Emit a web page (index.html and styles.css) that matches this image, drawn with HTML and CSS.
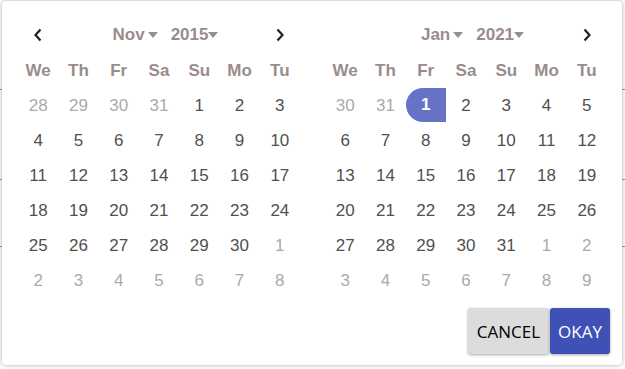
FILE: index.html
```html
<!DOCTYPE html>
<html>
<head>
<meta charset="utf-8">
<link rel="stylesheet" href="styles.css">
</head>
<body>
<div class="page">
  <div class="row r1"></div>
  <div class="row r2"></div>
  <div class="row r3"></div>
  <div class="row r4"></div>
</div>
<div class="dialog">
  <div class="cals">
    <div class="cal">
      <div class="head">
        <span class="arrow"><svg width="10" height="14" viewBox="0 0 10 14"><path d="M7.5 1.5 L2.5 7 L7.5 12.5" fill="none" stroke="#222" stroke-width="2.2"/></svg></span>
        <div class="sel">
          <span class="drop">Nov<i class="caret"></i></span>
          <span class="drop">2015<i class="caret tight"></i></span>
        </div>
        <span class="arrow last"><svg width="10" height="14" viewBox="0 0 10 14"><path d="M2.5 1.5 L7.5 7 L2.5 12.5" fill="none" stroke="#222" stroke-width="2.2"/></svg></span>
      </div>
      <div class="grid wd">
        <span>We</span><span>Th</span><span>Fr</span><span>Sa</span><span>Su</span><span>Mo</span><span>Tu</span>
      </div>
      <div class="grid days">
        <span class="o">28</span><span class="o">29</span><span class="o">30</span><span class="o">31</span><span>1</span><span>2</span><span>3</span>
        <span>4</span><span>5</span><span>6</span><span>7</span><span>8</span><span>9</span><span>10</span>
        <span>11</span><span>12</span><span>13</span><span>14</span><span>15</span><span>16</span><span>17</span>
        <span>18</span><span>19</span><span>20</span><span>21</span><span>22</span><span>23</span><span>24</span>
        <span>25</span><span>26</span><span>27</span><span>28</span><span>29</span><span>30</span><span class="o">1</span>
        <span class="o">2</span><span class="o">3</span><span class="o">4</span><span class="o">5</span><span class="o">6</span><span class="o">7</span><span class="o">8</span>
      </div>
    </div>
    <div class="cal">
      <div class="head">
        <span class="arrow"></span>
        <div class="sel">
          <span class="drop">Jan<i class="caret"></i></span>
          <span class="drop">2021<i class="caret tight"></i></span>
        </div>
        <span class="arrow last"><svg width="10" height="14" viewBox="0 0 10 14"><path d="M2.5 1.5 L7.5 7 L2.5 12.5" fill="none" stroke="#222" stroke-width="2.2"/></svg></span>
      </div>
      <div class="grid wd">
        <span>We</span><span>Th</span><span>Fr</span><span>Sa</span><span>Su</span><span>Mo</span><span>Tu</span>
      </div>
      <div class="grid days">
        <span class="o">30</span><span class="o">31</span><span class="selected">1</span><span>2</span><span>3</span><span>4</span><span>5</span>
        <span>6</span><span>7</span><span>8</span><span>9</span><span>10</span><span>11</span><span>12</span>
        <span>13</span><span>14</span><span>15</span><span>16</span><span>17</span><span>18</span><span>19</span>
        <span>20</span><span>21</span><span>22</span><span>23</span><span>24</span><span>25</span><span>26</span>
        <span>27</span><span>28</span><span>29</span><span>30</span><span>31</span><span class="o">1</span><span class="o">2</span>
        <span class="o">3</span><span class="o">4</span><span class="o">5</span><span class="o">6</span><span class="o">7</span><span class="o">8</span><span class="o">9</span>
      </div>
    </div>
  </div>
  <div class="actions">
    <button class="btn cancel">CANCEL</button>
    <button class="btn okay">OKAY</button>
  </div>
</div>
</body>
</html>
```
FILE: styles.css
```css
html, body {
  margin: 0;
  padding: 0;
  background: #fff;
}
body {
  width: 625px;
  height: 369px;
  overflow: hidden;
  position: relative;
  font-family: "Liberation Sans", Arial, sans-serif;
}
.page {
  display: flex;
  flex-direction: column;
}
.row {
  border-bottom: 1px solid #999;
}
.r1 { height: 89px; }
.r2 { height: 89px; }
.r3 { height: 66px; }
.r4 { height: 100px; border-bottom: none; }

.dialog {
  position: absolute;
  left: 2px;
  top: 1px;
  width: 620px;
  height: 364px;
  box-sizing: border-box;
  background: #fff;
  border-radius: 4px;
  box-shadow: 0 0 4px rgba(0, 0, 0, 0.35);
  padding: 16px 12px 11px 16px;
  display: flex;
  flex-direction: column;
}
.cals {
  display: flex;
  gap: 25px;
}
.cal {
  width: 282px;
}
.head {
  height: 36px;
  display: grid;
  grid-template-columns: repeat(7, 1fr);
  align-items: center;
}
.arrow {
  display: flex;
  justify-content: center;
  align-items: center;
}
.arrow.last {
  grid-column: 7;
}
.sel {
  grid-column: 2 / 7;
  display: flex;
  justify-content: center;
  gap: 13px;
  padding-left: 13px;
  font-size: 17px;
  font-weight: bold;
  color: #9a8c8c;
}
.drop {
  display: flex;
  align-items: center;
}
.caret {
  display: inline-block;
  width: 0;
  height: 0;
  margin-left: 3px;
  border-left: 5.5px solid transparent;
  border-right: 5.5px solid transparent;
  border-top: 6px solid #9a8c8c;
}
.caret.tight {
  margin-left: 0;
}
.grid {
  display: grid;
  grid-template-columns: repeat(7, 1fr);
}
.grid span {
  display: flex;
  align-items: center;
  justify-content: center;
}
.wd span {
  height: 35px;
  font-size: 17px;
  font-weight: bold;
  color: #9a8c8c;
}
.days span {
  height: 35px;
  font-size: 17px;
  color: #505050;
}
.days span.o {
  color: #aaa;
}
.days span.selected {
  height: 34px;
  background: #6673c6;
  color: #fff;
  font-weight: bold;
  border-radius: 17px 0 0 17px;
}
.actions {
  margin-top: auto;
  display: flex;
  justify-content: flex-end;
  gap: 1px;
}
.btn {
  height: 46px;
  border: none;
  border-radius: 3px;
  font-family: "Open Sans", "Noto Sans", sans-serif;
  font-size: 17px;
  padding: 0 6px;
  box-shadow: 0 1px 3px rgba(0, 0, 0, 0.35);
}
.cancel {
  width: 81px;
  background: #dcdcdc;
  color: #000;
}
.okay {
  width: 60px;
  background: #3f51b5;
  color: #fff;
}
```
